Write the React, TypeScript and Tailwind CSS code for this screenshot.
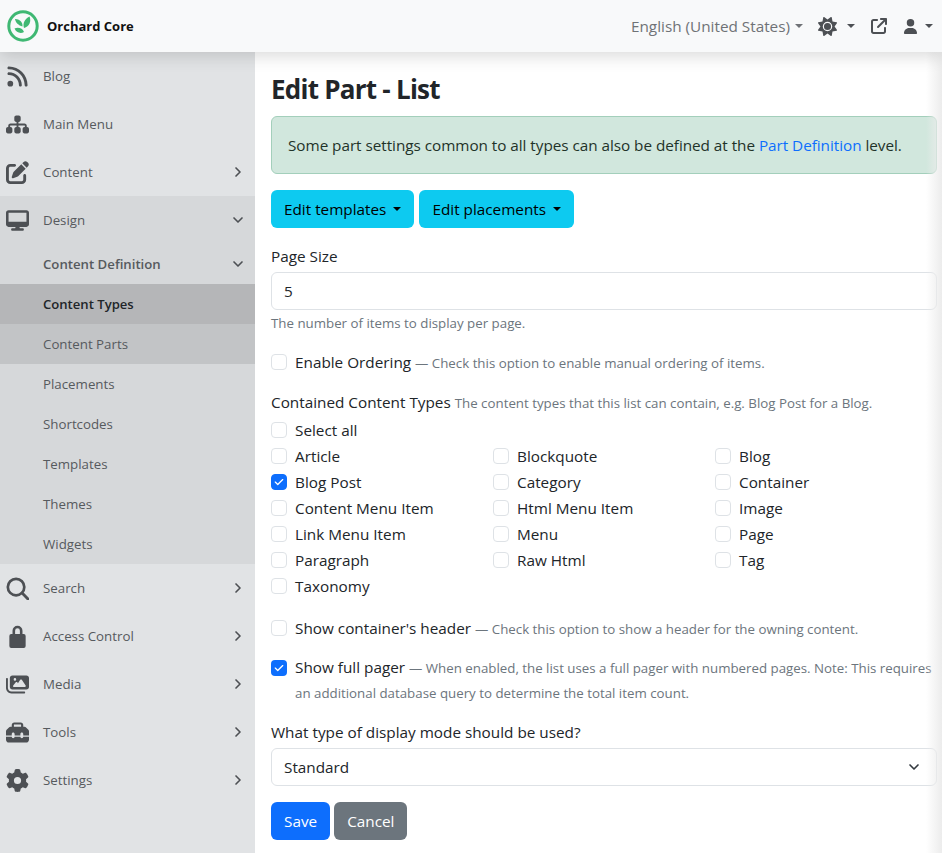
import type { ReactNode } from 'react'
import type { IconType } from 'react-icons'
import {
  FaRss,
  FaSitemap,
  FaPenToSquare,
  FaDesktop,
  FaImages,
  FaToolbox,
  FaGear,
  FaSun,
  FaArrowUpRightFromSquare,
  FaUser,
  FaCheck,
} from 'react-icons/fa6'
import { ChevronRight, ChevronDown } from 'lucide-react'

const font = "font-['Open_Sans','Noto_Sans',sans-serif]"

function SearchIcon({ size, className }: { size?: string | number; className?: string }) {
  return (
    <svg viewBox="0 0 24 24" width={size} height={size} className={className} fill="none" stroke="currentColor">
      <circle cx="10.5" cy="10.5" r="8.6" strokeWidth="2.8" />
      <path d="M16.8 16.8L23 23" strokeWidth="3" strokeLinecap="round" />
    </svg>
  )
}

function LockIcon({ size, className }: { size?: string | number; className?: string }) {
  return (
    <svg viewBox="0 0 24 24" width={size} height={size} className={className} fill="currentColor" fillRule="evenodd">
      <path d="M6.800 9.500V6a5.200 5.200 0 0 1 10.400 0v3.500h1.300a2 2 0 0 1 2 2V22a2 2 0 0 1-2 2h-13a2 2 0 0 1-2-2V11.500a2 2 0 0 1 2-2zM9.500 6v3.500h5V6a2.500 2.500 0 0 0-5 0z" />
    </svg>
  )
}

function Caret({ className = '' }: { className?: string }) {
  return (
    <span
      className={`inline-block w-0 h-0 border-x-[4.8px] border-x-transparent border-t-[4.8px] border-t-current ${className}`}
    />
  )
}

function NavRow({
  icon: Icon,
  label,
  arrow,
}: {
  icon: IconType
  label: string
  arrow?: 'right' | 'down'
}) {
  return (
    <div className="h-12 flex items-center pl-[6px] pr-[9px] text-[13.3px] text-[#565a5e]">
      <span className="w-[37px] flex items-center">
        <Icon size={23} className="text-[#4d5054]" />
      </span>
      <span className="flex-1 pt-[2px]">{label}</span>
      {arrow === 'right' && <ChevronRight size={16} strokeWidth={2.5} className="text-[#4d5054]" />}
      {arrow === 'down' && <ChevronDown size={16} strokeWidth={2.5} className="text-[#4d5054]" />}
    </div>
  )
}

function SubRow({ label, className = '' }: { label: string; className?: string }) {
  return (
    <div className={`h-10 flex items-center pl-[43px] pt-[2px] text-[13.3px] text-[#565a5e] ${className}`}>
      {label}
    </div>
  )
}

function Check({ checked = false, label, children }: { checked?: boolean; label: string; children?: ReactNode }) {
  return (
    <div className="flex items-center h-[26px]">
      <span
        className={`w-4 h-4 rounded-[4px] border shrink-0 flex items-center justify-center ${
          checked ? 'bg-[#0d6efd] border-[#0d6efd]' : 'bg-white border-[#dee2e6]'
        }`}
      >
        {checked && <FaCheck size={10} className="text-white" />}
      </span>
      <span className="ml-2 text-[#212529] whitespace-nowrap">{label}</span>
      {children}
    </div>
  )
}

function Hint({ children }: { children: string }) {
  return <span className="ml-1 mt-[4px] text-[13.3px] text-[#6c757d]">{children}</span>
}

const types = [
  'Article', 'Blockquote', 'Blog',
  'Blog Post', 'Category', 'Container',
  'Content Menu Item', 'Html Menu Item', 'Image',
  'Link Menu Item', 'Menu', 'Page',
  'Paragraph', 'Raw Html', 'Tag',
  'Taxonomy',
]

function Sidebar() {
  return (
    <aside className="w-[255px] shrink-0 bg-[#e1e3e5] pb-[49px]">
      <NavRow icon={FaRss} label="Blog" />
      <NavRow icon={FaSitemap} label="Main Menu" />
      <NavRow icon={FaPenToSquare} label="Content" arrow="right" />
      <div className="bg-[#d6d8da]">
        <NavRow icon={FaDesktop} label="Design" arrow="down" />
        <div className="h-10 flex items-center pl-[43px] pr-[9px] text-[13.2px] font-semibold text-[#565a5e]">
          <span className="flex-1 pt-[2px]">Content Definition</span>
          <ChevronDown size={16} strokeWidth={2.5} className="text-[#4d5054]" />
        </div>
        <SubRow label="Content Types" className="bg-[#b5b6b8] font-semibold !text-[13.1px] !text-[#212529]" />
        <SubRow label="Content Parts" className="bg-[#c2c4c6]" />
        <SubRow label="Placements" />
        <SubRow label="Shortcodes" />
        <SubRow label="Templates" />
        <SubRow label="Themes" />
        <SubRow label="Widgets" />
      </div>
      <NavRow icon={SearchIcon} label="Search" arrow="right" />
      <NavRow icon={LockIcon} label="Access Control" arrow="right" />
      <NavRow icon={FaImages} label="Media" arrow="right" />
      <NavRow icon={FaToolbox} label="Tools" arrow="right" />
      <NavRow icon={FaGear} label="Settings" arrow="right" />
    </aside>
  )
}

export default function App() {
  return (
    <div className={`relative h-[853px] w-[942px] overflow-hidden bg-white text-[15.3px] text-[#212529] ${font}`}>
      <header className="relative z-10 h-[52px] bg-[#f8f9fa] shadow-[0_4px_16px_rgba(0,0,0,0.15)] flex items-center pl-[7px] pr-[9px]">
        <svg viewBox="0 0 32 32" className="w-8 h-8">
          <circle cx="16" cy="16" r="14.2" fill="none" stroke="#3fb873" strokeWidth="3" />
          <path d="M15.500 16.500C11.500 15.500 8.500 12.500 8 9c3.800-.3 7.800 2.500 7.500 7.500z" fill="#3fb873" />
          <path d="M17 18c-1.500-4.500.5-9 5.500-11.500 2 4.500 0 10-5.500 11.500z" fill="#3fb873" />
          <path d="M7.500 18.500c3.500-1.500 8-.5 9.500 3.500-3.500 2-8 .5-9.500-3.500z" fill="#3fb873" />
        </svg>
        <span className="ml-2 pt-[2px] text-[13px] font-bold text-[#111]">Orchard Core</span>
        <div className="ml-auto flex items-center text-[#6f7276]">
          <span>English (United States)</span>
          <Caret className="ml-[5px]" />
          <FaSun size={19} className="ml-[15px] text-[#4d5054]" />
          <Caret className="ml-[10px] text-[#4d5054]" />
          <FaArrowUpRightFromSquare size={16} className="ml-[16px] text-[#4d5054]" />
          <FaUser size={15} className="ml-[16px] text-[#4d5054]" />
          <Caret className="ml-[7px] text-[#4d5054]" />
        </div>
      </header>
      <div className="flex">
        <Sidebar />
        <main className="flex-1 pl-4 pr-[5px]">
          <h1 className="mt-[20px] text-[26px] leading-[34px] font-bold tracking-[-0.75px] text-[#212529]">Edit Part - List</h1>
          <div className="mt-[10px] h-[58px] rounded-md border border-[#a3cfbb] bg-[#d1e7dd] px-4 flex items-center text-[#1f3329]">
            <span className="tracking-[-0.04px]">
              Some part settings common to all types can also be defined at the{' '}
              <span className="text-[#0d6efd]">Part Definition</span> level.
            </span>
          </div>
          <div className="mt-4 flex gap-[5px]">
            <button className="h-[38px] px-[13px] rounded-md bg-[#0dcaf0] text-black flex items-center">
              Edit templates
              <Caret className="ml-[7px]" />
            </button>
            <button className="h-[38px] px-[13px] rounded-md bg-[#0dcaf0] text-black flex items-center">
              Edit placements
              <Caret className="ml-[7px]" />
            </button>
          </div>
          <label className="block mt-[16px] leading-6">Page Size</label>
          <div className="mt-1 h-[38px] rounded-md border border-[#dee2e6] px-3 flex items-center">5</div>
          <p className="mt-[3px] text-[13.3px] leading-[21px] text-[#6c757d]">The number of items to display per page.</p>
          <div className="mt-[15px]">
            <Check label="Enable Ordering">
              <Hint>— Check this option to enable manual ordering of items.</Hint>
            </Check>
          </div>
          <p className="mt-[15px] leading-6">
            Contained Content Types{' '}
            <span className="text-[13.3px] text-[#6c757d]">The content types that this list can contain, e.g. Blog Post for a Blog.</span>
          </p>
          <div className="mt-[2px]">
            <Check label="Select all" />
          </div>
          <div className="grid grid-cols-3">
            {types.map((t) => (
              <Check key={t} label={t} checked={t === 'Blog Post'} />
            ))}
          </div>
          <div className="mt-[16px]">
            <Check label="Show container's header">
              <Hint>— Check this option to show a header for the owning content.</Hint>
            </Check>
          </div>
          <div className="mt-[14px] flex">
            <span className="mt-[5px] w-4 h-4 rounded-[4px] bg-[#0d6efd] shrink-0 flex items-center justify-center">
              <FaCheck size={10} className="text-white" />
            </span>
            <p className="ml-2 leading-6">
              Show full pager{' '}
              <span className="text-[13.3px] text-[#6c757d]">
                — When enabled, the list uses a full pager with numbered pages. Note: This requires an additional database query to determine the total item count.
              </span>
            </p>
          </div>
          <label className="block mt-[15px] leading-6">What type of display mode should be used?</label>
          <div className="mt-1 h-[38px] rounded-md border border-[#dee2e6] pl-3 pr-[14px] flex items-center justify-between">
            Standard
            <ChevronDown size={16} strokeWidth={2.5} className="text-[#343a40]" />
          </div>
          <div className="mt-4 flex gap-1">
            <button className="h-[38px] px-[13px] rounded-md bg-[#0d6efd] text-white">Save</button>
            <button className="h-[38px] px-[13px] rounded-md bg-[#6c757d] text-white">Cancel</button>
          </div>
        </main>
      </div>
      <div className="absolute right-0 top-[52px] bottom-0 w-4 bg-gradient-to-l from-[#ececec] to-transparent pointer-events-none" />
    </div>
  )
}
